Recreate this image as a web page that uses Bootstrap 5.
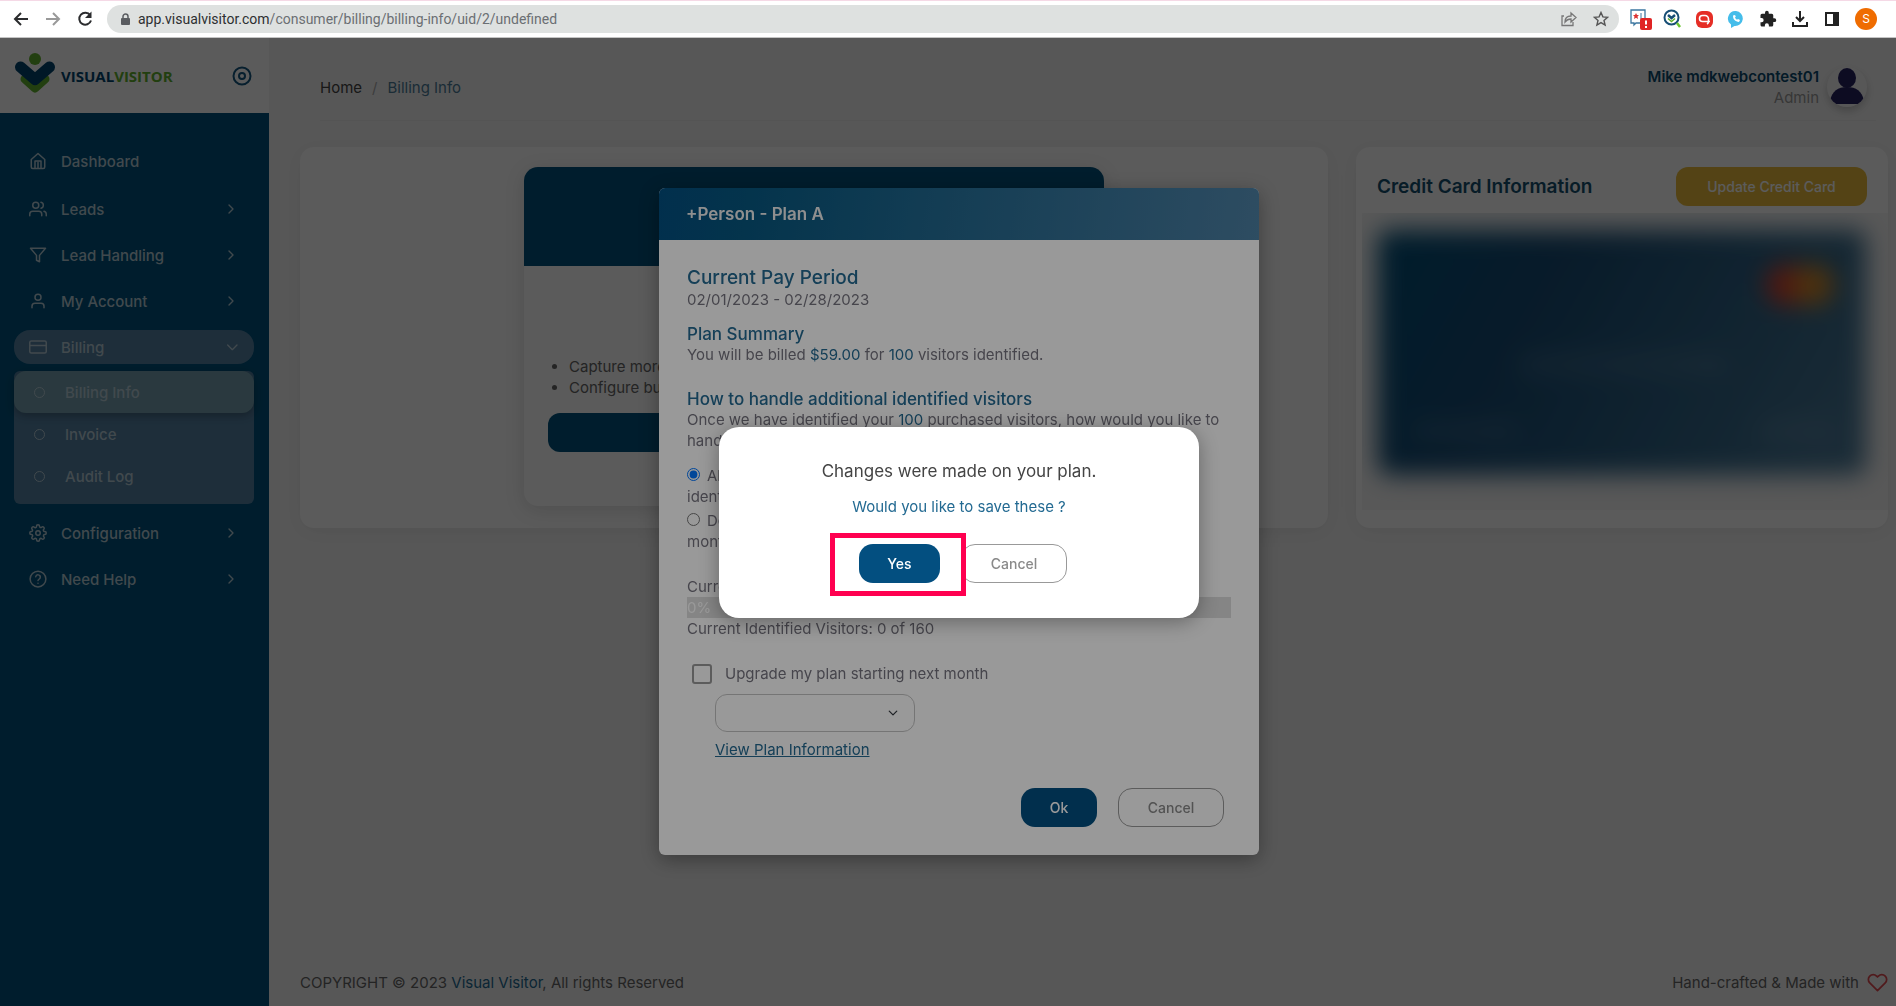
<!DOCTYPE html>
<html lang="en">
<head>
<meta charset="utf-8">
<meta name="viewport" content="width=device-width, initial-scale=1">
<title>Billing Info - Visual Visitor</title>
<link rel="stylesheet" href="https://cdn.jsdelivr.net/npm/bootstrap@5.3.0/dist/css/bootstrap.min.css">
<style>
:root { --navy: #00537d; --brand: #034f80; --link: #236a92; }
body { font-family: Inter, "Noto Sans", sans-serif; font-size: 15px; line-height: 21px; color: #76747f; background: #f3f3f3; }
a { color: var(--link); text-decoration: none; }
svg { display: block; flex: none; }
.line-icon { fill: none; stroke: currentColor; stroke-width: 2; stroke-linecap: round; stroke-linejoin: round; }

/* browser toolbar */
.toolbar { height: 38px; background: #fff; border-top: 1px solid #f5d9e6; border-bottom: 1px solid #c4c4c4; padding: 4px 0 4px 9px; }
.nav-icons { width: 98px; padding-left: 2px; gap: 12px; color: #2b2c2e; }
.nav-icons button { border: 0; background: none; padding: 0; color: inherit; }
.address { height: 28px; border-radius: 14px; background: #dee1e0; padding: 0 10px; color: #55585c; }
.url-label { font: 14px/28px Roboto, "Noto Sans", sans-serif; color: #6b6f73; }
.url-label b { font-weight: 400; color: #2d2f31; }
.tool-icons { width: 277px; padding-left: 9px; gap: 10px; color: #222; overflow: hidden; }
.profile { width: 22px; height: 22px; border-radius: 11px; background: #ef6c00; color: #fff; font-size: 12px; line-height: 22px; text-align: center; }

/* sidebar */
.side { width: 269px; background: var(--navy); flex: none; }
.brand-bar { height: 75px; background: #fdfdfd; padding: 0 17px 0 13px; }
.brand-mark { margin-bottom: 6px; }
.brand-name { font: 700 15px/20px "Open Sans", sans-serif; color: #00446e; }
.brand-name span { color: #62b12d; }
.side-nav { padding: 31px 15px 0 14px; }
.side-link { height: 34px; margin-bottom: 12px; padding: 0 15px; color: #b6ccd8; border-radius: 16px; gap: 14px; font-weight: 500; }
.side-link.home { margin-bottom: 14px; }
.side-link.open { background: #5481a3; margin-bottom: 7px; }
.sub-nav { background: #5481a3; border-radius: 6px; padding-bottom: 7px; margin-bottom: 12px; }
.sub-link { height: 42px; padding: 0 20px; gap: 20px; color: #b6ccd8; font-weight: 500; border-radius: 12px; }
.sub-link.current { background: #75a1af; box-shadow: 0 3px 8px #0004; }
.ring { width: 11px; height: 11px; border: 1px solid #b6ccd8; border-radius: 50%; }

/* page */
.page { padding: 28px 8px 13px 31px; }
.page-head { border-bottom: 1px solid #ececec; margin: 0 12px 26px 20px; padding-bottom: 12px; }
.crumbs { --bs-breadcrumb-divider-color: #aaa; --bs-breadcrumb-item-padding-x: 10px; }
.crumbs a { color: #444; }
.crumbs .active { color: #4b7c98; }
.avatar { width: 40px; height: 40px; border-radius: 50%; box-shadow: 0 4px 8px #0003; margin-right: 9px; }
.user-name { font-weight: 600; color: #0b4a6d; }
.user-role { color: #999; }
.panel { background: #fdfdfd; border-radius: 14px; box-shadow: 0 4px 20px #0000000f; height: 381px; }
.panel-card { width: 532px; }
.panel-head { padding: 20px 21px 7px; }
.plan { width: 580px; height: 339px; margin: 20px 0 0 224px; border-radius: 14px; box-shadow: 0 4px 20px #0002; overflow: hidden; }
.plan-top { height: 99px; background: var(--navy); }
.plan-body { padding: 0 24px; }
.plan ul { margin: 90px 0 15px -2px; padding-left: 23px; color: #666; }
.btn-plan { height: 39px; background: var(--navy); border-radius: 12px; }
.btn-round { height: 39px; border-radius: 14px; padding: 0; font-size: 14px; font-weight: 500; }
.btn-gold, .btn-gold:hover { width: 191px; background: #e9bd3d; color: #fff; border-radius: 12px; }
.card-title-text { font-size: 19px; font-weight: 600; color: #16506f; }
.blur-window { height: 297px; margin-left: 6px; padding: 17px 22px 0 16px; overflow: hidden; background: #f6f6f6; }
.pay-card { height: 245px; border-radius: 12px; background: linear-gradient(120deg, #00517c, #174c75 30%, #34688a 70%, #4e7d9c); filter: blur(12px); padding: 34px 32px; }
.disc { width: 42px; height: 42px; border-radius: 50%; background: #e5402c; }
.disc + .disc { background: #d98a25; margin-left: -16px; }
.smudge { height: 20px; background: #ffffff1a; border-radius: 10px; }
.foot { color: #666; }

/* overlays */
.shade { position: fixed; inset: 38px 0 0 0; background: rgba(0,0,0,.4); z-index: 10; }
.shade-top { z-index: 12; }
.plan-dialog { position: absolute; z-index: 11; top: 188px; left: calc(50% - 289px); width: 600px; background: #fff; border-radius: 6px; box-shadow: 0 5px 20px #0005; overflow: hidden; }
.plan-dialog header { height: 52px; padding: 0 27px; font-size: 17px; font-weight: 600; color: #eee; background: linear-gradient(100deg, #034f80, #07577f 15%, #4d80a3); }
.dialog-body { padding: 27px 28px 28px 28px; }
.dialog-body h2 { font-size: 19px; line-height: 22px; color: var(--link); margin: 0; font-weight: 500; }
.dialog-body h3 { font-size: 17px; line-height: 20px; color: var(--link); margin: 0; font-weight: 500; }
.dialog-body p { margin: 0 0 14px; }
.dialog-body .wide-gap { margin-bottom: 24px; }
.option-row { margin-bottom: 3px; }
.option-row input { width: 13px; height: 13px; margin: 0 7px 0 0; vertical-align: 0; }
.usage { height: 21px; background: #dedede; color: #fff; }
.tick { appearance: none; width: 20px; height: 20px; border: 2px solid #999; border-radius: 3px; margin: 0 13px 0 5px; }
.pick { width: 200px; height: 38px; border: 1px solid #c4c4c4; border-radius: 12px; margin: 10px 0 7px 28px; background-size: 10px 10px; background-position: right 16px center; }
.plan-link { margin-left: 28px; }
.dialog-actions { margin-top: 28px; gap: 21px; padding-right: 7px; }
.w-ok { width: 76px; }
.w-yes { width: 81px; }
.w-cancel { width: 106px; }
.btn-brand, .btn-brand:hover { background: var(--brand); color: #fff; }
.btn-line, .btn-line:hover { border: 1px solid #999; color: #8a8a8a; }
.confirm { position: absolute; z-index: 13; top: 427px; left: calc(50% - 229px); width: 480px; background: #fff; border-radius: 20px; box-shadow: 0 4px 20px #0005; padding: 33px 0 35px; }
.confirm h4 { font-size: 17px; line-height: 22px; margin: 0 0 14px; font-weight: 400; color: #444; }
.confirm p { margin: 0 0 27px; color: var(--link); }
.confirm .actions { padding-left: 140px; gap: 21px; }
.marker { position: absolute; top: 106px; left: 111px; width: 136px; height: 63px; border: 5px solid #ff0050; }
</style>
<script src="https://cdn.jsdelivr.net/npm/bootstrap@5.3.0/dist/js/bootstrap.bundle.min.js"></script>
</head>
<body class="d-flex flex-column min-vh-100">

<div class="toolbar d-flex align-items-center">
  <div class="nav-icons d-flex align-items-center">
    <button type="button" aria-label="Back"><svg width="20" height="20" viewBox="0 0 20 20" fill="none" stroke="currentColor" stroke-width="2"><path d="M17 10H4M10 4l-6 6 6 6"/></svg></button>
    <button type="button" aria-label="Forward"><svg width="20" height="20" viewBox="0 0 20 20" fill="none" stroke="#999" stroke-width="2"><path d="M3 10h13M10 4l6 6-6 6"/></svg></button>
    <button type="button" aria-label="Reload"><svg width="20" height="20" viewBox="0 0 20 20"><path d="M15.200 6.200A6 6 0 1 0 16 11.500" fill="none" stroke="currentColor" stroke-width="2"/><path d="M16.500 2.500v6.500H10z" fill="currentColor"/></svg></button>
  </div>
  <div class="address d-flex align-items-center flex-grow-1">
    <svg class="ms-1 me-2" width="9" height="13" viewBox="0 0 9 13"><rect y="5" width="9" height="7" rx="1" fill="#5a5d61"/><path d="M2 5V3.500a2.500 2.500 0 0 1 5 0V5" fill="none" stroke="#5a5d61" stroke-width="1.500"/></svg>
    <div class="url-label flex-grow-1"><b>app.visualvisitor.com</b>/consumer/billing/billing-info/uid/2/undefined</div>
    <svg class="me-3" width="16" height="16" viewBox="0 0 16 16" fill="none" stroke="#777" stroke-width="1.300"><path d="M3 5H1v9.500h11V11M4 11c0-4 2-6 6-6V2l5 4.500L10 11V8C7 8 5.500 9 4 11z"/></svg>
    <svg width="16" height="16" viewBox="0 0 16 16" fill="none" stroke="#555" stroke-width="1.400"><path d="M8 1.500l1.900 4.400 4.700.4-3.600 3.100 1.100 4.700L8 11.600l-4.100 2.500L5 9.400 1.400 6.300l4.700-.4z"/></svg>
  </div>
  <div class="tool-icons d-flex align-items-center">
    <svg width="24" height="24" viewBox="0 0 24 24"><path d="M3 3h14v13H8l-2 2v-2H3z" fill="#fff" stroke="#3c77a0" stroke-width="1.300"/><path d="M8 6l1 2h2L9.500 9.500l.5 2.500-2-1.300L6 12l.5-2.500L5 8h2z" fill="#d33"/><path d="M13 6v6" stroke="#3c77a0"/><rect x="12" y="11" width="12" height="12" rx="2" fill="#e02424"/><path d="M18 13.500v4M18 19v2" stroke="#fff" stroke-width="2"/></svg>
    <svg width="20" height="22" viewBox="0 0 20 22"><circle cx="9.500" cy="9.500" r="7" fill="#fff" stroke="#174e75" stroke-width="2"/><path d="M6 7l3.500 3L13 7" fill="none" stroke="#174e75" stroke-width="2.500"/><path d="M6 10.500l3.500 3 3.500-3" fill="none" stroke="#62b12d" stroke-width="1.500"/><path d="M15 15l3 4" stroke="#6ac52d" stroke-width="2.500"/></svg>
    <svg class="ms-1" width="17" height="17" viewBox="0 0 17 17"><rect width="17" height="17" rx="6" fill="#e52e26"/><path d="M14 10.500H6.500a3 3 0 1 1 0-6H9a3.500 3.500 0 0 1 3.500 3.500v2.500c0 1-.5 2-1.500 2.500" fill="none" stroke="#fff" stroke-width="1.600"/></svg>
    <svg class="ms-1" width="18" height="18" viewBox="0 0 18 18"><path d="M9 1a7.500 7.500 0 1 1-1.500 15L4 18v-3.500A7.500 7.500 0 0 1 9 1z" fill="#45bdea"/><path d="M6 5.500c0 4 2 6 6 6.500l1-2-2-1-1 .8C9 9 8.500 8.500 8 7.500l.8-.9L8 5z" fill="#fff"/></svg>
    <svg class="ms-1" width="18" height="18" viewBox="0 0 24 24" fill="#222"><path d="M20.500 11H19V7a2 2 0 0 0-2-2h-4V3.500a2.500 2.500 0 0 0-5 0V5H4a2 2 0 0 0-2 2v3.800h1.500a2.700 2.700 0 0 1 0 5.400H2V20c0 1.100.9 2 2 2h3.800v-1.500a2.700 2.700 0 0 1 5.400 0V22H17a2 2 0 0 0 2-2v-4h1.500a2.500 2.500 0 0 0 0-5z"/></svg>
    <svg class="ms-1" width="18" height="18" viewBox="0 0 18 18" fill="none" stroke="#222" stroke-width="2"><path d="M9 1v9M5 7l4 4 4-4M2 12v4h14v-4"/></svg>
    <svg class="ms-1" width="18" height="18" viewBox="0 0 18 18"><rect x="3" y="3" width="12" height="12" fill="none" stroke="#222" stroke-width="2"/><path d="M10 2h6v14h-6z" fill="#222"/></svg>
    <div class="profile ms-1 flex-shrink-0">S</div>
    <svg class="ms-2" width="8" height="16" viewBox="0 0 8 16" fill="#333"><circle cx="4" cy="3" r="1.500"/><circle cx="4" cy="8" r="1.500"/><circle cx="4" cy="13" r="1.500"/></svg>
  </div>
</div>

<div class="d-flex flex-grow-1">
  <aside class="side">
    <div class="brand-bar d-flex align-items-center">
      <svg class="brand-mark" width="44" height="44" viewBox="0 0 44 44" fill="none" stroke-linecap="round" stroke-linejoin="round"><path d="M12 28l10 9 10-9" stroke="#62b12d" stroke-width="9"/><path d="M7.500 16L22 28.500 36.500 16" stroke="#00446e" stroke-width="11"/><circle cx="22" cy="8" r="6" fill="#62b12d"/></svg>
      <div class="brand-name ms-1">VISUAL<span>VISITOR</span></div>
      <svg class="ms-auto line-icon" width="20" height="20" viewBox="0 0 20 20" stroke-width="1.500" color="#145780"><circle cx="10" cy="10" r="8.500"/><circle cx="10" cy="10" r="3"/></svg>
    </div>
    <nav class="side-nav">
      <a href="#" class="side-link home d-flex align-items-center"><svg class="line-icon" width="18" height="18" viewBox="0 0 24 24"><path d="M3 10l9-8 9 8v10a2 2 0 0 1-2 2H5a2 2 0 0 1-2-2zM8 22V12h8v10M12 14v8"/></svg>Dashboard</a>
      <a href="#" class="side-link d-flex align-items-center"><svg class="line-icon" width="18" height="18" viewBox="0 0 24 24"><path d="M17 21v-2a4 4 0 0 0-4-4H5a4 4 0 0 0-4 4v2M23 21v-2a4 4 0 0 0-3-3.900M16 3.100a4 4 0 0 1 0 7.800"/><circle cx="9" cy="7" r="4"/></svg>Leads<svg class="line-icon ms-auto" width="16" height="16" viewBox="0 0 24 24"><path d="M9 18l6-6-6-6"/></svg></a>
      <a href="#" class="side-link d-flex align-items-center"><svg class="line-icon" width="18" height="18" viewBox="0 0 24 24"><path d="M22 3H2l8 9.500V19l4 2v-8.500z"/></svg>Lead Handling<svg class="line-icon ms-auto" width="16" height="16" viewBox="0 0 24 24"><path d="M9 18l6-6-6-6"/></svg></a>
      <a href="#" class="side-link d-flex align-items-center"><svg class="line-icon" width="18" height="18" viewBox="0 0 24 24"><path d="M20 21v-2a4 4 0 0 0-4-4H8a4 4 0 0 0-4 4v2"/><circle cx="12" cy="7" r="4"/></svg>My Account<svg class="line-icon ms-auto" width="16" height="16" viewBox="0 0 24 24"><path d="M9 18l6-6-6-6"/></svg></a>
      <a href="#" class="side-link open d-flex align-items-center"><svg class="line-icon" width="18" height="18" viewBox="0 0 24 24"><rect x="1" y="4" width="22" height="16" rx="2"/><path d="M1 10h22"/></svg>Billing<svg class="line-icon ms-auto" width="16" height="16" viewBox="0 0 24 24"><path d="M7 9l7 7 7-7"/></svg></a>
      <div class="sub-nav">
        <a href="#" class="sub-link current d-flex align-items-center"><span class="ring"></span>Billing Info</a>
        <a href="#" class="sub-link d-flex align-items-center"><span class="ring"></span>Invoice</a>
        <a href="#" class="sub-link d-flex align-items-center"><span class="ring"></span>Audit Log</a>
      </div>
      <a href="#" class="side-link d-flex align-items-center"><svg class="line-icon" width="18" height="18" viewBox="0 0 24 24"><circle cx="12" cy="12" r="3"/><path d="M19.400 15a1.650 1.650 0 0 0 .33 1.820l.06.06a2 2 0 0 1-2.830 2.830l-.06-.06a1.650 1.650 0 0 0-2.800 1.170V21a2 2 0 0 1-4 0v-.09A1.650 1.650 0 0 0 7.200 19.700l-.06.06a2 2 0 1 1-2.830-2.830l.06-.06A1.650 1.650 0 0 0 3.090 14H3a2 2 0 0 1 0-4h.09A1.650 1.650 0 0 0 4.300 7.200l-.06-.06a2 2 0 1 1 2.830-2.830l.06.06A1.650 1.650 0 0 0 10 3.090V3a2 2 0 0 1 4 0v.09a1.650 1.650 0 0 0 2.800 1.210l.06-.06a2 2 0 1 1 2.830 2.830l-.06.06A1.650 1.650 0 0 0 20.910 10H21a2 2 0 0 1 0 4h-.09a1.650 1.650 0 0 0-1.510 1z"/></svg>Configuration<svg class="line-icon ms-auto" width="16" height="16" viewBox="0 0 24 24"><path d="M9 18l6-6-6-6"/></svg></a>
      <a href="#" class="side-link d-flex align-items-center"><svg class="line-icon" width="18" height="18" viewBox="0 0 24 24"><circle cx="12" cy="12" r="10.500"/><path d="M9 9a3 3 0 0 1 6 1c0 2-3 2.500-3 4M12 17.500v.1"/></svg>Need Help<svg class="line-icon ms-auto" width="16" height="16" viewBox="0 0 24 24"><path d="M9 18l6-6-6-6"/></svg></a>
    </nav>
  </aside>

  <main class="page d-flex flex-column flex-grow-1">
    <div class="page-head d-flex align-items-center">
      <ol class="breadcrumb crumbs mb-0"><li class="breadcrumb-item"><a href="#">Home</a></li><li class="breadcrumb-item active">Billing Info</li></ol>
      <div class="ms-auto text-end me-2"><div class="user-name">Mike mdkwebcontest01</div><div class="user-role">Admin</div></div>
      <svg class="avatar" width="40" height="40" viewBox="0 0 40 40" fill="#262262"><ellipse cx="20" cy="11" rx="9" ry="10"/><path d="M3 34c2-10 8-14 17-14s15 4 17 14q0 3-4 3H7q-4 0-4-3z"/></svg>
    </div>
    <div class="d-flex">
      <section class="panel flex-grow-1 me-4">
        <div class="plan">
          <div class="plan-top"></div>
          <div class="plan-body">
            <ul><li>Capture more</li><li>Configure business</li></ul>
            <div class="btn-plan"></div>
          </div>
        </div>
      </section>
      <section class="panel panel-card flex-shrink-0 ms-1 overflow-hidden">
        <div class="panel-head d-flex align-items-center justify-content-between">
          <div class="card-title-text">Credit Card Information</div>
          <button type="button" class="btn btn-round btn-gold">Update Credit Card</button>
        </div>
        <div class="blur-window">
          <div class="pay-card d-flex flex-column justify-content-between">
            <div class="d-flex justify-content-end"><div class="disc"></div><div class="disc"></div></div>
            <div class="smudge w-50 mx-auto"></div>
            <div class="d-flex justify-content-between"><div class="smudge w-25"></div><div class="smudge w-ok"></div></div>
          </div>
        </div>
      </section>
    </div>
    <footer class="foot d-flex align-items-center mt-auto">
      <span>COPYRIGHT © 2023 <a href="#">Visual Visitor</a>, All rights Reserved</span>
      <span class="ms-auto me-2">Hand-crafted &amp; Made with</span>
      <svg class="line-icon" width="21" height="21" viewBox="0 0 24 24" color="#e04a50"><path d="M20.840 4.610a5.500 5.500 0 0 0-7.780 0L12 5.670l-1.060-1.060a5.500 5.500 0 0 0-7.780 7.780L12 21.230l8.840-8.840a5.500 5.500 0 0 0 0-7.780z"/></svg>
    </footer>
  </main>
</div>

<div class="shade"></div>
<div class="plan-dialog" role="dialog" aria-label="+Person - Plan A">
  <header class="d-flex align-items-center">+Person - Plan A</header>
  <div class="dialog-body">
    <h2>Current Pay Period</h2>
    <p>02/01/2023 - 02/28/2023</p>
    <h3>Plan Summary</h3>
    <p class="wide-gap">You will be billed <a href="#">$59.00</a> for <a href="#">100</a> visitors identified.</p>
    <h3>How to handle additional identified visitors</h3>
    <p>Once we have identified your <a href="#">100</a> purchased visitors, how would you like to<br>handle</p>
    <div class="option-row"><input type="radio" name="extra" id="allow" checked><label for="allow" class="d-inline">All<br>identified</label></div>
    <div class="option-row"><input type="radio" name="extra" id="deny"><label for="deny" class="d-inline">Do<br>month</label></div>
    <p class="mt-4 mb-0">Current</p>
    <div class="usage">0%</div>
    <p class="wide-gap">Current Identified Visitors: 0 of 160</p>
    <div class="d-flex align-items-center"><input type="checkbox" class="tick" id="upgrade"><label for="upgrade">Upgrade my plan starting next month</label></div>
    <select class="form-select pick" aria-label="Plan"><option></option></select>
    <a href="#" class="plan-link text-decoration-underline">View Plan Information</a>
    <div class="dialog-actions d-flex justify-content-end">
      <button type="button" class="btn btn-round btn-brand w-ok">Ok</button>
      <button type="button" class="btn btn-round btn-line w-cancel">Cancel</button>
    </div>
  </div>
</div>

<div class="shade shade-top"></div>
<div class="confirm text-center" role="alertdialog" aria-label="Save changes">
  <h4>Changes were made on your plan.</h4>
  <p>Would you like to save these ?</p>
  <div class="actions d-flex">
    <button type="button" class="btn btn-round btn-brand w-yes">Yes</button>
    <button type="button" class="btn btn-round btn-line w-cancel">Cancel</button>
  </div>
  <div class="marker"></div>
</div>
</body>
</html>
